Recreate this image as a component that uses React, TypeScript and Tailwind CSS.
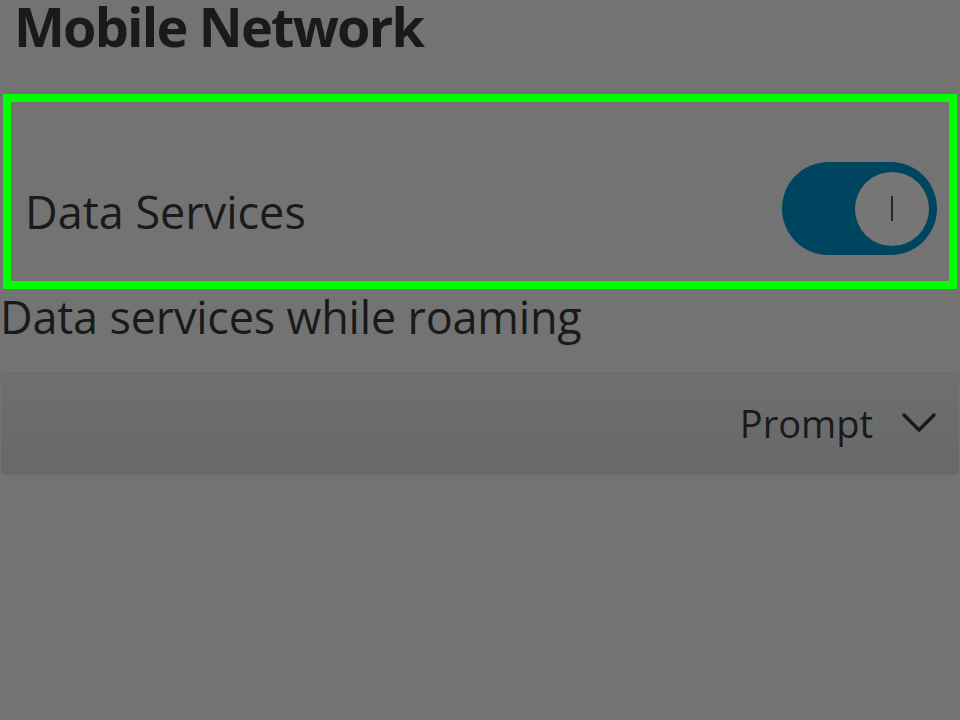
import React from "react";

function Toggle() {
  return (
    <div className="w-[155px] h-[93px] rounded-full bg-[#00455f] flex items-center justify-end pr-[8px] shrink-0">
      <div className="w-[74px] h-[74px] rounded-full bg-[#767676] flex items-center justify-center">
        <div className="w-[2px] h-[25px] bg-[#1e2a30]" />
      </div>
    </div>
  );
}

export default function App() {
  return (
    <div
      className="w-[960px] h-[720px] bg-[#737373] overflow-hidden text-[#1a1a1a]"
      style={{ fontFamily: '"Open Sans", "Noto Sans", sans-serif' }}
    >
      <div className="h-[94px] pl-[14px]">
        <h1 className="text-[54px] font-bold leading-[52px] tracking-[-1.8px]">
          Mobile Network
        </h1>
      </div>
      <div className="mx-[3px] h-[195px] border-[8px] border-[#00ff00] flex items-center justify-between pl-[14px] pr-[12px] pt-[34px]">
        <span className="text-[45px] leading-none mt-[6px]">Data Services</span>
        <Toggle />
      </div>
      <div className="pt-[5px] h-[81px]">
        <span className="text-[45px] leading-none tracking-[-0.2px]">Data services while roaming</span>
      </div>
      <div className="h-[105px] mx-[1px] rounded-[4px] bg-gradient-to-b from-[#6f6f6f] to-[#686868] border-t border-[#7a7a7a] flex items-center justify-end pr-[22px] gap-[28px]">
        <span className="text-[38px] leading-none">Prompt</span>
        <svg width="36" height="22" viewBox="0 0 36 22" fill="none">
          <path d="M3 3 L18 18 L33 3" stroke="#1a1a1a" strokeWidth="3.5" strokeLinecap="round" strokeLinejoin="round" />
        </svg>
      </div>
    </div>
  );
}
